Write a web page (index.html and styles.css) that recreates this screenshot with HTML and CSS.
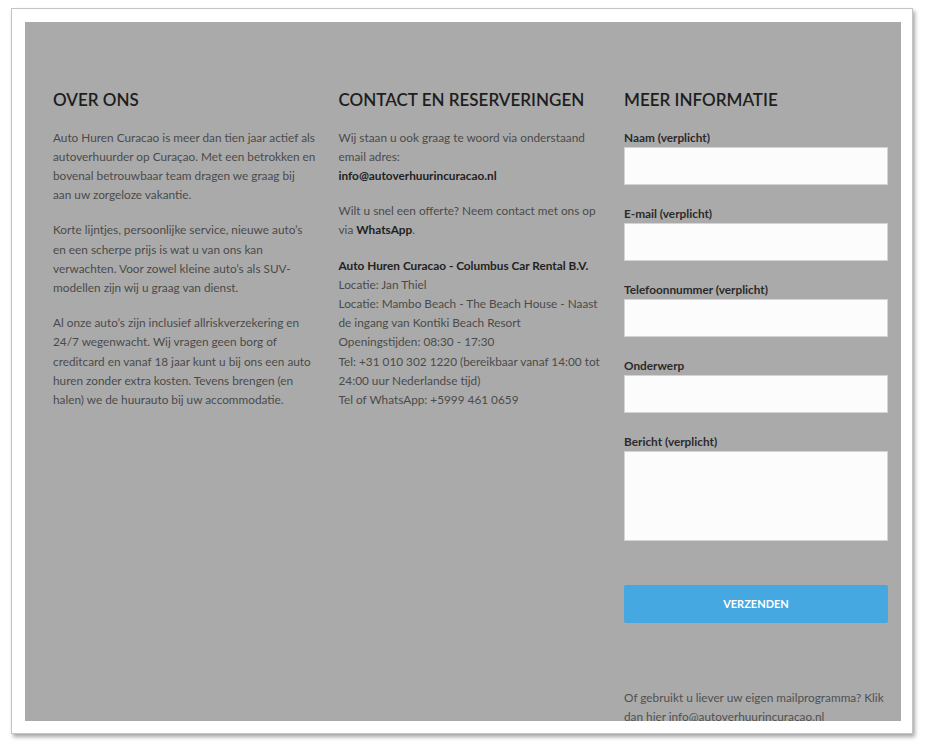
FILE: index.html
```html
<!DOCTYPE html>
<html lang="nl">
<head>
<meta charset="utf-8">
<title>Contact</title>
<link rel="stylesheet" href="styles.css">
</head>
<body>
<div class="frame">
  <div class="panel">
    <div class="cols">
      <section class="col">
        <h2>OVER ONS</h2>
        <p>Auto Huren Curacao is meer dan tien jaar actief als<br>autoverhuurder op Curaçao. Met een betrokken en<br>bovenal betrouwbaar team dragen we graag bij<br>aan uw zorgeloze vakantie.</p>
        <p>Korte lijntjes, persoonlijke service, nieuwe auto’s<br>en een scherpe prijs is wat u van ons kan<br>verwachten. Voor zowel kleine auto’s als SUV-<br>modellen zijn wij u graag van dienst.</p>
        <p>Al onze auto’s zijn inclusief allriskverzekering en<br>24/7 wegenwacht. Wij vragen geen borg of<br>creditcard en vanaf 18 jaar kunt u bij ons een auto<br>huren zonder extra kosten. Tevens brengen (en<br>halen) we de huurauto bij uw accommodatie.</p>
      </section>
      <section class="col">
        <h2>CONTACT EN RESERVERINGEN</h2>
        <p>Wij staan u ook graag te woord via onderstaand<br>email adres:<br><strong>info@autoverhuurincuracao.nl</strong></p>
        <p>Wilt u snel een offerte? Neem contact met ons op<br>via <strong>WhatsApp</strong>.</p>
        <p><strong>Auto Huren Curacao - Columbus Car Rental B.V.</strong><br>Locatie: Jan Thiel<br>Locatie: Mambo Beach - The Beach House - Naast<br>de ingang van Kontiki Beach Resort<br>Openingstijden: 08:30 - 17:30<br>Tel: +31 010 302 1220 (bereikbaar vanaf 14:00 tot<br>24:00 uur Nederlandse tijd)<br>Tel of WhatsApp: +5999 461 0659</p>
      </section>
      <section class="col">
        <h2>MEER INFORMATIE</h2>
        <form class="form">
          <label class="field"><span class="label">Naam (verplicht)</span><input type="text" class="input"></label>
          <label class="field"><span class="label">E-mail (verplicht)</span><input type="email" class="input"></label>
          <label class="field"><span class="label">Telefoonnummer (verplicht)</span><input type="tel" class="input"></label>
          <label class="field"><span class="label">Onderwerp</span><input type="text" class="input"></label>
          <label class="field"><span class="label">Bericht (verplicht)</span><textarea class="input area"></textarea></label>
          <button type="button" class="submit">VERZENDEN</button>
        </form>
        <p class="note">Of gebruikt u liever uw eigen mailprogramma? Klik<br>dan hier info@autoverhuurincuracao.nl</p>
      </section>
    </div>
  </div>
</div>
</body>
</html>
```
FILE: styles.css
```css
html, body {
  margin: 0;
  padding: 0;
  background: #ffffff;
}

body {
  font-family: "Lato", "Open Sans", sans-serif;
  width: 926px;
  height: 749px;
  overflow: hidden;
}

.frame {
  margin: 8px 0 0 11px;
  width: 876px;
  height: 699px;
  padding: 13px 11px 12px 13px;
  background: #ffffff;
  border: 1px solid #c4c4c4;
  box-shadow: 2px 3px 4px rgba(0, 0, 0, 0.35);
}

.panel {
  width: 876px;
  height: 699px;
  background: #aaaaaa;
  overflow: hidden;
  box-sizing: border-box;
  padding: 68px 14px 0 28px;
}

.cols {
  display: grid;
  grid-template-columns: 263px 263px 264px;
  column-gap: 22.5px;
}

.col h2 {
  margin: 0 0 17.5px;
  font-size: 17px;
  line-height: 20px;
  font-weight: 600;
  color: #1e1e1e;
  letter-spacing: 0;
}

.col p {
  margin: 0 0 16px;
  font-size: 11.8px;
  line-height: 19.2px;
  color: #4a4a4a;
}

.col strong {
  font-weight: 700;
  color: #222222;
}

.form {
  display: flex;
  flex-direction: column;
}

.field {
  display: flex;
  flex-direction: column;
  margin-bottom: 18.5px;
}

.label {
  font-size: 11.8px;
  line-height: 19.5px;
  font-weight: 700;
  color: #2a2a2a;
}

.input {
  display: block;
  box-sizing: border-box;
  width: 264px;
  height: 38px;
  margin: 0;
  border: 1px solid #d4d4d4;
  background: #fcfcfc;
  font: inherit;
}

.area {
  height: 90px;
  resize: none;
}

.submit {
  margin-top: 25px;
  width: 264px;
  height: 38px;
  border: none;
  border-radius: 2px;
  background: #45a8e0;
  color: #ffffff;
  font-family: inherit;
  font-size: 11px;
  font-weight: 700;
  letter-spacing: 0;
}

.col p.note {
  margin-top: 65px;
  color: #505050;
}
```
